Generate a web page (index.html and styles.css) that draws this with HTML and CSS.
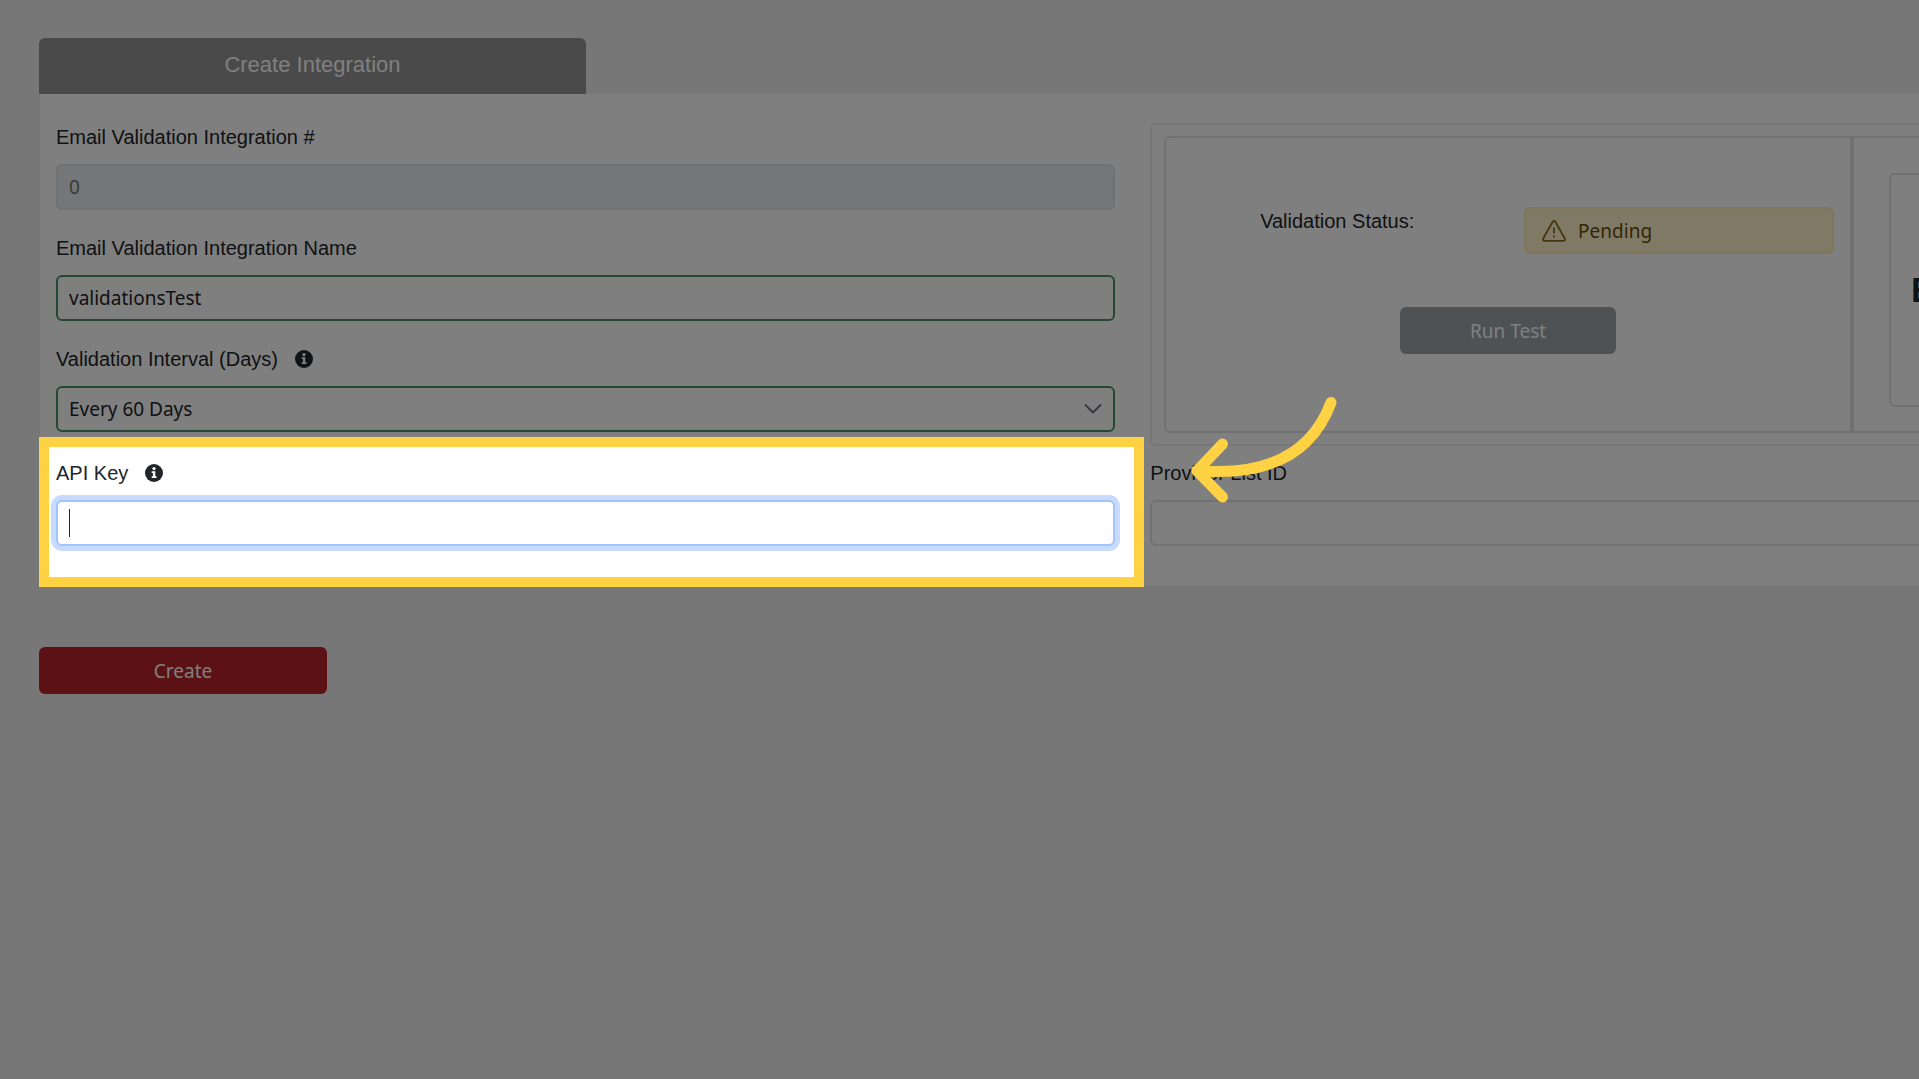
FILE: index.html
```
<!DOCTYPE html>
<html lang="en">
<head>
	<meta charset="utf-8">
	<title>Create Integration</title>
	<link rel="stylesheet" href="styles.css">
</head>
<body>
	<svg class="defs" width="0" height="0" aria-hidden="true">
		<symbol id="info" viewBox="0 0 18 18">
			<circle cx="9" cy="9" r="9" fill="currentColor"/>
			<circle cx="9" cy="4.6" r="1.6" fill="#fff"/>
			<path d="M6.7 7.3h3.6v5h1.2v1.8H6.7v-1.8h1.2V9.1H6.7z" fill="#fff"/>
		</symbol>
	</svg>

	<form class="page">
		<div class="tab">Create Integration</div>

		<div class="panel">
			<div class="column">
				<div class="field">
					<label for="integrationId">Email Validation Integration #</label>
					<input class="control" id="integrationId" type="text" value="0" disabled>
				</div>
				<div class="field">
					<label for="integrationName">Email Validation Integration Name</label>
					<input class="control valid" id="integrationName" type="text" value="validationsTest">
				</div>
				<div class="field">
					<label for="interval">Validation Interval (Days) <svg class="info"><use href="#info"/></svg></label>
					<div class="select-wrap">
						<select class="control valid" id="interval">
							<option>Every 60 Days</option>
						</select>
						<svg class="chevron" viewBox="0 0 18 12"><path d="M1.5 2l7.5 7.5L16.5 2" fill="none" stroke="#6c757d" stroke-width="2" stroke-linecap="round" stroke-linejoin="round"/></svg>
					</div>
				</div>
			</div>

			<div class="status-box">
				<div class="status">
					<div class="status-row">
						<span class="status-label">Validation Status:</span>
						<div class="alert">
							<svg class="warning" viewBox="0 0 24 22" fill="none" stroke="#8a6d1f" stroke-width="1.8" stroke-linejoin="round"><path d="M10.7 1.7L1.2 18.5Q.4 20.8 2.5 20.8H21.5Q23.6 20.8 22.8 18.5L13.3 1.7Q12 .3 10.7 1.7z"/><path d="M12 7.5v6M12 15.6v2"/></svg>
							Pending
						</div>
					</div>
					<button class="btn run" type="button" disabled>Run Test</button>
				</div>
				<div class="provider">
					<div class="card"><span class="brand">E</span></div>
				</div>
			</div>

			<div class="field api">
				<label for="apiKey">API Key <svg class="info"><use href="#info"/></svg></label>
				<input class="control focused" id="apiKey" type="text">
				<div class="caret"></div>
				<div class="spotlight"></div>
				<svg class="arrow" viewBox="0 0 150 110" fill="none" stroke="#ffd244" stroke-width="11" stroke-linecap="round" stroke-linejoin="round"><path d="M142 7.5C124 56 82 82 8 75.5M33.500 49L8 76L33.500 102"/></svg>
			</div>
			<div class="field">
				<label for="listId">Provider List ID</label>
				<input class="control" id="listId" type="text">
			</div>
		</div>

		<button class="btn create" type="submit">Create</button>
	</form>
</body>
</html>
```
FILE: styles.css
```
* {
	box-sizing: border-box;
}

html {
	height: 100%;
	overflow: hidden;
}

body {
	min-height: 100%;
	margin: 0;
	padding: 38px 39px;
	background: #eee;
	color: #212529;
	font-family: "Liberation Sans", Arial, sans-serif;
	font-size: 20px;
	line-height: 28px;
	overflow: hidden;
}

.defs {
	position: absolute;
}

/* the form is wider than the window, the right side runs off screen */
.page {
	width: 114vw;
}

.tab {
	width: 25%;
	height: 56px;
	border-radius: 6px 6px 0 0;
	background: #949494;
	color: #fff;
	font-size: 22px;
	line-height: 54px;
	text-align: center;
}

.panel {
	display: grid;
	grid-template-columns: 1fr 1fr;
	column-gap: 35px;
	padding: 29px 16px 40px;
	border: 1px solid #e8e8e8;
	border-top: 0;
	background: #fff;
}

.field {
	display: flex;
	flex-direction: column;
	gap: 13px;
}

.column {
	display: flex;
	flex-direction: column;
	gap: 24px;
}

.field label {
	display: flex;
	align-items: center;
	gap: 17px;
}

.info {
	width: 18px;
	height: 18px;
}

.control {
	display: block;
	width: 100%;
	height: 46px;
	padding: 0 11px;
	border: 2px solid #dee2e6;
	border-radius: 6px;
	background: #fff;
	color: #212529;
	font-family: "Noto Sans", sans-serif;
	font-size: 19px;
	outline: 0;
	appearance: none;
}

.control:disabled {
	background: #e9ecef;
	color: #6c757d;
}

.control.valid {
	border-color: #488f6c;
}

.control.focused {
	border-color: #9ec5fe;
	box-shadow: 0 0 0 5px #c8daff;
}

.select-wrap {
	position: relative;
}

.chevron {
	position: absolute;
	top: 17px;
	right: 13px;
	width: 18px;
	height: 12px;
}

.status-box {
	display: grid;
	grid-template-columns: 2fr 1fr;
	height: 323px;
	padding: 11px 12px;
	border: 2px solid #ebecee;
	border-radius: 6px;
}

.status,
.provider {
	border: 2px solid #dee2e6;
}

.status {
	border-radius: 6px 0 0 6px;
	padding-top: 69px;
}

.provider {
	border-radius: 0 6px 6px 0;
	padding: 35px 35px 0;
}

.status-row {
	display: grid;
	grid-template-columns: 1fr 1fr;
	text-align: center;
}

.alert {
	display: flex;
	align-items: center;
	gap: 12px;
	height: 47px;
	margin: 0 16px;
	padding: 0 16px;
	border: 2px solid #ffecb5;
	border-radius: 6px;
	background: #fff3cd;
	color: #664d03;
	font-family: "Noto Sans", sans-serif;
	font-size: 19px;
}

.warning {
	width: 24px;
	height: 22px;
}

.btn {
	display: block;
	height: 47px;
	border: 0;
	border-radius: 6px;
	color: #fff;
	font-family: "Noto Sans", sans-serif;
	font-size: 19px;
}

.run {
	width: 216px;
	margin: 53px auto 0;
	background: #6c757d;
	opacity: .65;
}

.card {
	display: flex;
	align-items: center;
	height: 234px;
	padding-left: 20px;
	border: 2px solid #dee2e6;
	border-radius: 6px;
}

.brand {
	font-size: 35px;
	font-weight: bold;
}

.api {
	position: relative;
}

.panel > .api,
.panel > .api + .field {
	margin-top: 13px;
}

.caret {
	position: absolute;
	left: 13px;
	bottom: 9px;
	width: 1px;
	height: 28px;
	background: #212529;
}

/* yellow frame, everything outside of it is dimmed */
.spotlight {
	position: absolute;
	z-index: 1;
	inset: -22px -29px -41px -17px;
	border: 10px solid #ffd244;
	box-shadow: 0 0 0 200vw rgba(0, 0, 0, .5);
	pointer-events: none;
}

.arrow {
	position: absolute;
	z-index: 2;
	top: -64px;
	right: -224px;
	width: 150px;
	height: 110px;
}

.create {
	width: 288px;
	margin-top: 60px;
	background: #b92229;
}
```
